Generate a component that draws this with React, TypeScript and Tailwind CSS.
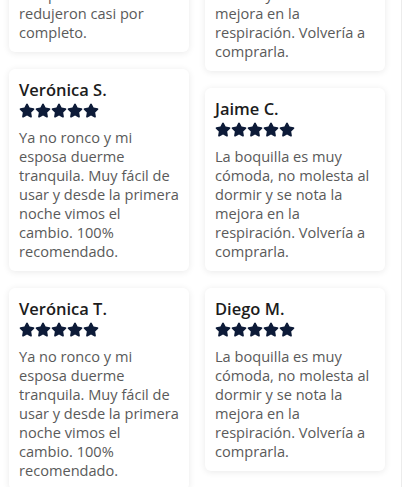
import React from "react";

const STAR =
  "M316.9 18C311.6 7 300.4 0 288.1 0s-23.4 7-28.8 18L195 150.3 51.4 171.5c-12 1.8-22 10.2-25.7 21.7s-.7 24.2 7.9 32.7L137.8 329 113.2 474.7c-2 12 3 24.2 12.9 31.3s23 8 33.8 2.3l128.3-68.5 128.3 68.5c10.8 5.7 23.9 4.9 33.8-2.3s14.9-19.3 12.9-31.3L438.5 329 542.7 225.9c8.6-8.5 11.7-21.2 7.9-32.7s-13.7-19.9-25.7-21.7L381.2 150.3 316.9 18z";

function Stars() {
  return (
    <div className="flex h-[18px] items-center">
      {[0, 1, 2, 3, 4].map((i) => (
        <svg key={i} viewBox="0 0 576 512" className="h-[15px] w-[16px] fill-[#0d1b38]">
          <path d={STAR} />
        </svg>
      ))}
    </div>
  );
}

type Review = { name: string; text: React.ReactNode };

function Card({ r }: { r: Review }) {
  return (
    <div className="rounded-md bg-white p-[10px] shadow-[0_1px_7px_rgba(0,0,0,0.09)]">
      <div className="text-[16.5px] font-semibold leading-[22px] text-[#1c1c1c]">{r.name}</div>
      <Stars />
      <p className="mt-[9px] text-[14.6px] leading-[19px] text-[#5a5a5a]">{r.text}</p>
    </div>
  );
}

const veronica = (
  <>
    Ya no ronco y mi esposa duerme tranquila. Muy fácil de usar y desde la primera noche vimos el
    <br />
    cambio. 100% recomendado.
  </>
);
const boquilla =
  "La boquilla es muy cómoda, no molesta al dormir y se nota la mejora en la respiración. Volvería a comprarla.";

const left: Review[] = [
  {
    name: "Laura P.",
    text: (
      <>
        Excelente producto.
        <br />
        En pocas noches mis
        <br />
        ronquidos se
        <br />
        redujeron casi por
        <br />
        completo.
      </>
    ),
  },
  { name: "Verónica S.", text: veronica },
  { name: "Verónica T.", text: veronica },
];
const right: Review[] = [
  { name: "Carlos R.", text: boquilla },
  { name: "Jaime C.", text: boquilla },
  { name: "Diego M.", text: boquilla },
];

export default function App() {
  return (
    <div
      className="h-[487px] w-[402px] overflow-hidden border-r border-[#ececec] bg-white"
      style={{ fontFamily: '"Open Sans", "Noto Sans", sans-serif' }}
    >
      <div className="-mt-[112px] flex items-start gap-4 pl-[9px]">
        <div className="flex w-[180px] flex-col gap-[17px]">
          {left.map((r) => (
            <Card key={r.name} r={r} />
          ))}
        </div>
        <div className="flex w-[180px] flex-col gap-[17px]">
          {right.map((r) => (
            <Card key={r.name} r={r} />
          ))}
        </div>
      </div>
    </div>
  );
}
